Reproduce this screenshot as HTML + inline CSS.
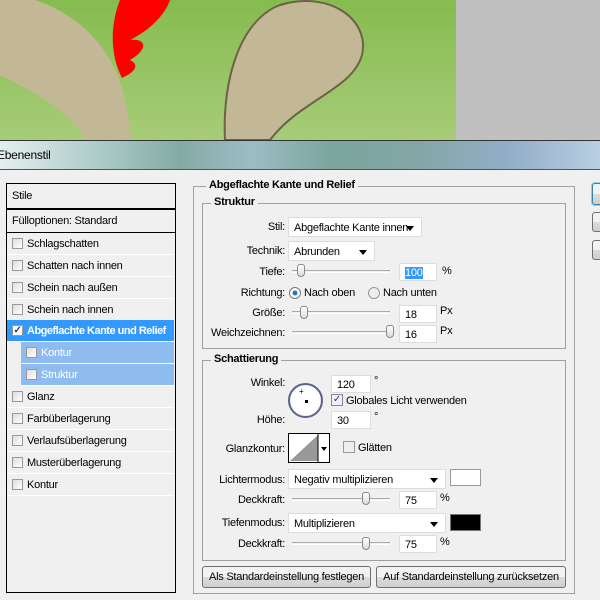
<!DOCTYPE html><html><head><meta charset="utf-8"><style>
*{box-sizing:border-box;margin:0;padding:0}
body{width:600px;height:600px;overflow:hidden;position:relative;font-family:"Liberation Sans",sans-serif;font-size:11px;letter-spacing:-0.25px;color:#000;background:#f0f0f0}
.a{position:absolute;white-space:nowrap}
.grp{position:absolute;border:1px solid #a0a0a0}
.lg{position:absolute;background:#f0f0f0;font-weight:bold;padding:0 3px;top:-8px}
.r{position:absolute;text-align:right;white-space:nowrap}
.inp{position:absolute;background:#fff;border:1px solid #ddd;height:18px;padding:3px 5px;font-size:11px}
.sel{position:absolute;background:#fff;border:1px solid #ddd;height:20px;padding:4px 13px 0 5px;overflow:hidden;white-space:nowrap}
.sel:after{content:"";position:absolute;right:7px;top:8px;border:4px solid transparent;border-top:5px solid #000;border-bottom:0}
.trk{position:absolute;height:3px;border-top:1px solid #aaa;border-bottom:1px solid #fff}
.th{position:absolute;width:8px;height:13px;border:1px solid #888;border-radius:3px 3px 4px 4px;background:linear-gradient(#fff,#ddd)}
.li{position:absolute;left:7px;width:167px;height:22px;border-bottom:1px solid #fff;padding:5px 0 0 20px;white-space:nowrap}
.cb{position:absolute;left:5px;top:5px;width:11px;height:11px;border:1px solid #999;background:linear-gradient(135deg,#ddd,#fff)}
.btn{position:absolute;height:22px;border:1px solid #707070;border-radius:3px;background:linear-gradient(#f2f2f2 50%,#dcdcdc 50%,#cfcfcf);text-align:center;padding-top:4px;white-space:nowrap}
</style></head><body>
<div class="a" style="left:0;top:0;width:456px;height:140px;background:linear-gradient(#86bb4f,#a7cc78)"></div>
<div class="a" style="left:456px;top:0;width:144px;height:140px;background:#c0c0c0"></div>
<svg class="a" style="left:0;top:0" width="456" height="140">
<path d="M120 0 L170 0 C165 15 150 30 130 40 C145 38 150 48 130 60 C140 65 135 72 122 78 C110 55 110 25 120 0Z" fill="#f00"/>
<path d="M0 0 L35 0 C80 15 115 50 125 100 L132 140 L85 140 C70 110 30 90 0 75Z" fill="#c3b895"/>
<path d="M225 140 C222 80 240 20 280 5 C330 -10 370 20 362 55 C352 90 300 100 270 140Z" fill="#c3b895" stroke="#6d6248" stroke-width="2"/>
</svg>
<div class="a" style="left:0;top:140px;width:600px;height:30px;background:linear-gradient(90deg,#e4eeee,#a8c8c4 18%,#84aaa4 30%,#9dbcc6 42%,#7aa69c 55%,#84a6a8 70%,#93aec8 85%,#b8cfe2);border-top:1px solid #333;border-bottom:1px solid #555"></div>
<div class="a" style="left:-3px;top:148px;font-size:12px">Ebenenstil</div>
<div class="a" style="left:0;top:170px;width:600px;height:430px;background:#f0f0f0"></div>

<div class="a" style="left:6px;top:183px;width:170px;height:410px;border:1px solid #000;background:#f0f0f0"></div>
<div class="a" style="left:6px;top:183px;width:170px;height:26px;border:1px solid #000;padding:6px 0 0 5px">Stile</div>
<div class="a" style="left:6px;top:209px;width:170px;height:24px;border:1px solid #000;padding:5px 0 0 5px">Fülloptionen: Standard</div>
<div class="li" style="top:233px"><span class="cb"></span>Schlagschatten</div>
<div class="li" style="top:255px"><span class="cb"></span>Schatten nach innen</div>
<div class="li" style="top:277px"><span class="cb"></span>Schein nach außen</div>
<div class="li" style="top:299px"><span class="cb"></span>Schein nach innen</div>
<div class="li" style="top:320px;background:#3399ff;color:#fff;font-weight:bold;letter-spacing:-0.5px"><span class="cb" style="background:#fff;color:#336;font-size:10px;line-height:9px;text-align:center">✓</span>Abgeflachte Kante und Relief</div>
<div class="li" style="top:342px;left:21px;width:153px;background:#8fbcf0;color:#fff"><span class="cb"></span>Kontur</div>
<div class="li" style="top:364px;left:21px;width:153px;background:#8fbcf0;color:#fff"><span class="cb"></span>Struktur</div>
<div class="li" style="top:386px"><span class="cb"></span>Glanz</div>
<div class="li" style="top:408px"><span class="cb"></span>Farbüberlagerung</div>
<div class="li" style="top:430px"><span class="cb"></span>Verlaufsüberlagerung</div>
<div class="li" style="top:452px"><span class="cb"></span>Musterüberlagerung</div>
<div class="li" style="top:474px"><span class="cb"></span>Kontur</div>

<div class="grp" style="left:193px;top:186px;width:382px;height:408px"><div class="lg" style="left:12px">Abgeflachte Kante und Relief</div></div>
<div class="grp" style="left:202px;top:203px;width:364px;height:146px"><div class="lg" style="left:8px">Struktur</div></div>
<div class="r" style="right:315px;top:221px">Stil:</div>
<div class="sel" style="left:288px;top:217px;width:134px">Abgeflachte Kante innen</div>
<div class="r" style="right:315px;top:245px">Technik:</div>
<div class="sel" style="left:288px;top:241px;width:87px">Abrunden</div>
<div class="r" style="right:315px;top:266px">Tiefe:</div>
<div class="trk" style="left:292px;top:270px;width:98px"></div><div class="th" style="left:297px;top:264px"></div>
<div class="inp" style="left:399px;top:263px;width:38px"><span style="background:#3399ff;color:#fff">100</span></div><div class="a" style="left:442px;top:265px">%</div>
<div class="r" style="right:315px;top:287px">Richtung:</div>
<div class="a" style="left:289px;top:287px;width:12px;height:12px;border-radius:50%;border:1px solid #777;background:radial-gradient(#2a6fc0 30%,#fff 40%)"></div>
<div class="a" style="left:304px;top:287px">Nach oben</div>
<div class="a" style="left:368px;top:287px;width:12px;height:12px;border-radius:50%;border:1px solid #999;background:#eee"></div>
<div class="a" style="left:383px;top:287px">Nach unten</div>
<div class="r" style="right:315px;top:307px">Größe:</div>
<div class="trk" style="left:292px;top:311px;width:98px"></div><div class="th" style="left:300px;top:306px"></div>
<div class="inp" style="left:399px;top:305px;width:38px">18</div><div class="a" style="left:440px;top:305px">Px</div>
<div class="r" style="right:315px;top:327px">Weichzeichnen:</div>
<div class="trk" style="left:292px;top:331px;width:98px"></div><div class="th" style="left:386px;top:325px"></div>
<div class="inp" style="left:399px;top:325px;width:38px">16</div><div class="a" style="left:440px;top:325px">Px</div>

<div class="grp" style="left:202px;top:360px;width:364px;height:201px"><div class="lg" style="left:8px">Schattierung</div></div>
<div class="r" style="right:315px;top:377px">Winkel:</div>
<div class="a" style="left:288px;top:383px;width:35px;height:35px;border-radius:50%;border:2px solid #5a6488;background:radial-gradient(#fff 60%,#dde)"></div>
<div class="a" style="left:305px;top:400px;width:3px;height:3px;background:#000"></div>
<div class="a" style="left:299px;top:387px;font-size:8px">+</div>
<div class="inp" style="left:331px;top:375px;width:40px">120</div><div class="a" style="left:374px;top:375px">°</div>
<div class="a" style="left:331px;top:394px;width:12px;height:12px;border:1px solid #888;background:#eef;font-size:10px;line-height:10px;text-align:center;color:#336">✓</div>
<div class="a" style="left:346px;top:395px">Globales Licht verwenden</div>
<div class="r" style="right:315px;top:414px">Höhe:</div>
<div class="inp" style="left:331px;top:411px;width:40px">30</div><div class="a" style="left:374px;top:411px">°</div>
<div class="r" style="right:315px;top:443px">Glanzkontur:</div>
<svg class="a" style="left:288px;top:433px" width="42" height="30"><rect x="0.5" y="0.5" width="41" height="29" fill="#fff" stroke="#000"/><path d="M2 28 L30 2 L30 28Z" fill="#999"/><line x1="30" y1="0" x2="30" y2="30" stroke="#000"/><path d="M33 14 L39 14 L36 18Z" fill="#000"/></svg>
<div class="a" style="left:343px;top:441px;width:12px;height:12px;border:1px solid #999;background:#eee"></div>
<div class="a" style="left:358px;top:442px">Glätten</div>
<div class="r" style="right:315px;top:474px">Lichtermodus:</div>
<div class="sel" style="left:288px;top:469px;width:158px">Negativ multiplizieren</div>
<div class="a" style="left:450px;top:469px;width:31px;height:17px;background:#fff;border:1px solid #999"></div>
<div class="r" style="right:315px;top:494px">Deckkraft:</div>
<div class="trk" style="left:292px;top:498px;width:98px"></div><div class="th" style="left:362px;top:492px"></div>
<div class="inp" style="left:399px;top:491px;width:38px">75</div><div class="a" style="left:440px;top:492px">%</div>
<div class="r" style="right:315px;top:517px">Tiefenmodus:</div>
<div class="sel" style="left:288px;top:513px;width:158px">Multiplizieren</div>
<div class="a" style="left:450px;top:514px;width:31px;height:17px;background:#000;border:1px solid #777"></div>
<div class="r" style="right:315px;top:538px">Deckkraft:</div>
<div class="trk" style="left:292px;top:542px;width:98px"></div><div class="th" style="left:362px;top:537px"></div>
<div class="inp" style="left:399px;top:535px;width:38px">75</div><div class="a" style="left:440px;top:536px">%</div>

<div class="btn" style="left:202px;top:566px;width:169px">Als Standardeinstellung festlegen</div>
<div class="btn" style="left:376px;top:566px;width:190px">Auf Standardeinstellung zurücksetzen</div>

<div class="btn" style="left:592px;top:183px;width:20px;border-color:#3c7fb1;box-shadow:0 0 0 1px #9cd"></div>
<div class="btn" style="left:592px;top:212px;width:20px;height:20px"></div>
<div class="btn" style="left:592px;top:240px;width:20px;height:20px"></div>
</body></html>
